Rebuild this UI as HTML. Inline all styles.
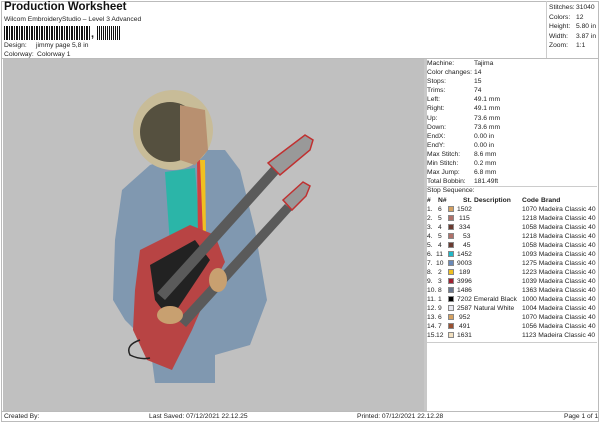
<!DOCTYPE html>
<html><head><meta charset="utf-8"><style>
*{margin:0;padding:0;box-sizing:border-box}
body{width:600px;height:424px;background:#fff;font-family:"Liberation Sans",sans-serif;font-size:6.7px;color:#222;position:relative;overflow:hidden}
.a{position:absolute;white-space:nowrap}
.r{position:absolute;left:0;width:175px;height:9px}
.sw{position:absolute;top:1px;width:6px;height:6px;border:1px solid #888}
</style></head><body>
<div class="a" style="left:1px;top:1px;width:598px;height:421px;border:1px solid #bbb"></div>
<div class="a" style="left:4px;top:1px;font-size:11.5px;font-weight:bold;color:#111">Production Worksheet</div>
<div class="a" style="left:4px;top:16px">Wilcom EmbroideryStudio – Level 3 Advanced</div>
<div class="a" style="left:4px;top:26px;width:86px;height:14px;background:repeating-linear-gradient(90deg,#111 0 1px,#fff 1px 2px,#111 2px 3px,#111 3px 4px,#fff 4px 5px)"></div>
<div class="a" style="left:91px;top:28px;font-size:11px;font-weight:bold">,</div>
<div class="a" style="left:97px;top:26px;width:24px;height:14px;background:repeating-linear-gradient(90deg,#111 0 1px,#fff 1px 2px,#111 2px 3px,#fff 3px 4px)"></div>
<div class="a" style="left:4px;top:42px">Design:</div><div class="a" style="left:36px;top:42px">jimmy page 5,8 in</div>
<div class="a" style="left:4px;top:51px">Colorway:</div><div class="a" style="left:37px;top:51px">Colorway 1</div>
<div class="a" style="left:546px;top:1px;width:53px;height:58px;border-left:1px solid #ccc"></div>
<div class="a" style="left:549px;top:3px;line-height:9.5px">Stitches:<br>Colors:<br>Height:<br>Width:<br>Zoom:</div>
<div class="a" style="left:576px;top:3px;line-height:9.5px">31040<br>12<br>5.80 in<br>3.87 in<br>1:1</div>
<div class="a" style="left:2px;top:58px;width:597px;height:1px;background:#bbb"></div>
<div class="a" style="left:3px;top:59px;width:421px;height:352px;background:#c0c0c0"></div>
<div class="a" style="left:424px;top:59px;width:3px;height:352px;background:#c8c8c8"></div>
<svg class="a" style="left:90px;top:60px" width="260" height="330" viewBox="90 60 260 330">
<path d="M150 165 L200 150 L225 150 L240 170 L255 230 L267 300 L250 345 L215 355 L215 383 L155 383 L150 345 L125 320 L113 300 L115 240 L122 190 Z" fill="#8098b0"/>
<path d="M165 172 L195 168 L200 235 L170 245 Z" fill="#2bb5a8"/>
<path d="M197 160 L203 160 L205 240 L198 240 Z" fill="#d04040"/>
<path d="M200 160 L205 160 L206 235 L203 235 Z" fill="#f0c020"/>
<circle cx="173" cy="130" r="40" fill="#c8bc98"/>
<circle cx="170" cy="132" r="30" fill="#55503f"/>
<path d="M180 105 L205 110 L208 150 L195 165 L180 160 Z" fill="#b89070"/>
<path d="M140 250 L190 225 L215 235 L225 262 L205 300 L192 330 L172 370 L147 360 L133 330 L135 290 Z" fill="#b84444"/>
<path d="M150 265 L195 240 L210 260 L170 320 L155 300 Z" fill="#222"/>
<path d="M157 293 L272 166 L280 172 L165 300 Z" fill="#5a5a5a"/>
<path d="M178 320 L285 204 L292 210 L186 327 Z" fill="#5a5a5a"/>
<path d="M268 163 L305 135 L313 140 L310 150 L280 175 Z" fill="#999" stroke="#c03030" stroke-width="1.5"/>
<path d="M283 200 L303 182 L310 186 L306 196 L292 210 Z" fill="#999" stroke="#c03030" stroke-width="1.5"/>
<path d="M140 340 Q125 345 130 355 Q140 360 150 358" stroke="#222" stroke-width="1.5" fill="none"/>
<ellipse cx="170" cy="315" rx="13" ry="9" fill="#c8a070"/>
<ellipse cx="218" cy="280" rx="9" ry="12" fill="#c8a070"/>
</svg>
<div class="a" style="left:427px;top:59px;width:170px">
<div class="a" style="left:0;top:0;line-height:9.1px">Machine:<br>Color changes:<br>Stops:<br>Trims:<br>Left:<br>Right:<br>Up:<br>Down:<br>EndX:<br>EndY:<br>Max Stitch:<br>Min Stitch:<br>Max Jump:<br>Total Bobbin:</div>
<div class="a" style="left:47px;top:0;line-height:9.1px">Tajima<br>14<br>15<br>74<br>49.1 mm<br>49.1 mm<br>73.6 mm<br>73.6 mm<br>0.00 in<br>0.00 in<br>8.6 mm<br>0.2 mm<br>6.8 mm<br>181.49ft</div>
</div>
<div class="a" style="left:427px;top:186px;width:170px;height:1px;background:#ccc"></div>
<div class="a" style="left:427px;top:187px">Stop Sequence:</div>
<div class="a" style="left:427px;top:196px;width:172px;height:10px;line-height:9px">
<div class="r" style="top:0;font-weight:bold;text-decoration:underline"><span class="a" style="left:0">#</span><span class="a" style="left:11px">N#</span><span class="a" style="left:36px">St.</span><span class="a" style="left:47px">Description</span><span class="a" style="left:95px">Code</span><span class="a" style="left:114px">Brand</span></div>
</div>
<div class="a" style="left:427px;top:342px;width:170px;height:1px;background:#ccc"></div>
<div class="a" style="left:2px;top:411px;width:597px;height:1px;background:#bbb"></div>
<div class="a" style="left:4px;top:413px">Created By:</div>
<div class="a" style="left:149px;top:413px">Last Saved: 07/12/2021 22.12.25</div>
<div class="a" style="left:357px;top:413px">Printed: 07/12/2021 22.12.28</div>
<div class="a" style="left:564px;top:413px">Page 1 of 1</div>
<div class="a" style="left:427px;top:205px;width:172px;line-height:9px">
<div class="r" style="top:0"><span class="a">1.</span><span class="a" style="left:11px">6</span><i class="sw" style="left:21px;background:#d4a060"></i><span class="a" style="left:30px">1502</span><span class="a" style="left:95px">1070 Madeira Classic 40</span></div>
<div class="r" style="top:9px"><span class="a">2.</span><span class="a" style="left:11px">5</span><i class="sw" style="left:21px;background:#b07068"></i><span class="a" style="left:32px">115</span><span class="a" style="left:95px">1218 Madeira Classic 40</span></div>
<div class="r" style="top:18px"><span class="a">3.</span><span class="a" style="left:11px">4</span><i class="sw" style="left:21px;background:#6a3a30"></i><span class="a" style="left:32px">334</span><span class="a" style="left:95px">1058 Madeira Classic 40</span></div>
<div class="r" style="top:27px"><span class="a">4.</span><span class="a" style="left:11px">5</span><i class="sw" style="left:21px;background:#b07068"></i><span class="a" style="left:36px">53</span><span class="a" style="left:95px">1218 Madeira Classic 40</span></div>
<div class="r" style="top:36px"><span class="a">5.</span><span class="a" style="left:11px">4</span><i class="sw" style="left:21px;background:#6a3a30"></i><span class="a" style="left:36px">45</span><span class="a" style="left:95px">1058 Madeira Classic 40</span></div>
<div class="r" style="top:45px"><span class="a">6.</span><span class="a" style="left:9px">11</span><i class="sw" style="left:21px;background:#20b8c8"></i><span class="a" style="left:30px">1452</span><span class="a" style="left:95px">1093 Madeira Classic 40</span></div>
<div class="r" style="top:54px"><span class="a">7.</span><span class="a" style="left:9px">10</span><i class="sw" style="left:21px;background:#6a8ab8"></i><span class="a" style="left:30px">9003</span><span class="a" style="left:95px">1275 Madeira Classic 40</span></div>
<div class="r" style="top:63px"><span class="a">8.</span><span class="a" style="left:11px">2</span><i class="sw" style="left:21px;background:#f0c020"></i><span class="a" style="left:32px">189</span><span class="a" style="left:95px">1223 Madeira Classic 40</span></div>
<div class="r" style="top:72px"><span class="a">9.</span><span class="a" style="left:11px">3</span><i class="sw" style="left:21px;background:#a02030"></i><span class="a" style="left:30px">3996</span><span class="a" style="left:95px">1039 Madeira Classic 40</span></div>
<div class="r" style="top:81px"><span class="a">10.</span><span class="a" style="left:11px">8</span><i class="sw" style="left:21px;background:#6a7890"></i><span class="a" style="left:30px">1486</span><span class="a" style="left:95px">1363 Madeira Classic 40</span></div>
<div class="r" style="top:90px"><span class="a">11.</span><span class="a" style="left:11px">1</span><i class="sw" style="left:21px;background:#000"></i><span class="a" style="left:30px">7202 Emerald Black</span><span class="a" style="left:95px">1000 Madeira Classic 40</span></div>
<div class="r" style="top:99px"><span class="a">12.</span><span class="a" style="left:11px">9</span><i class="sw" style="left:21px;background:#e8e8f0"></i><span class="a" style="left:30px">2587 Natural White</span><span class="a" style="left:95px">1004 Madeira Classic 40</span></div>
<div class="r" style="top:108px"><span class="a">13.</span><span class="a" style="left:11px">6</span><i class="sw" style="left:21px;background:#d4a060"></i><span class="a" style="left:32px">952</span><span class="a" style="left:95px">1070 Madeira Classic 40</span></div>
<div class="r" style="top:117px"><span class="a">14.</span><span class="a" style="left:11px">7</span><i class="sw" style="left:21px;background:#9a5030"></i><span class="a" style="left:32px">491</span><span class="a" style="left:95px">1056 Madeira Classic 40</span></div>
<div class="r" style="top:126px"><span class="a">15.</span><span class="a" style="left:9px">12</span><i class="sw" style="left:21px;background:#f2e0c0"></i><span class="a" style="left:30px">1631</span><span class="a" style="left:95px">1123 Madeira Classic 40</span></div>
</div>
</body></html>
